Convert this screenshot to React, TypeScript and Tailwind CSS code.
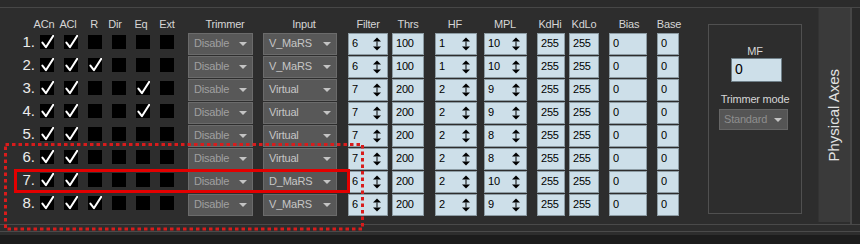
import React from "react";

type Row = {
  n: number;
  c: number[];
  input: string;
  f: number;
  t: number;
  hf: number;
  mpl: number;
};

const rows: Row[] = [
  { n: 1, c: [1, 1, 0, 0, 0, 0], input: "V_MaRS", f: 6, t: 100, hf: 1, mpl: 10 },
  { n: 2, c: [1, 1, 1, 0, 0, 0], input: "V_MaRS", f: 6, t: 100, hf: 1, mpl: 10 },
  { n: 3, c: [1, 1, 0, 0, 1, 0], input: "Virtual", f: 7, t: 200, hf: 2, mpl: 9 },
  { n: 4, c: [1, 1, 0, 0, 1, 0], input: "Virtual", f: 7, t: 200, hf: 2, mpl: 9 },
  { n: 5, c: [1, 1, 0, 0, 0, 0], input: "Virtual", f: 7, t: 200, hf: 2, mpl: 8 },
  { n: 6, c: [1, 1, 0, 0, 0, 0], input: "Virtual", f: 7, t: 200, hf: 2, mpl: 8 },
  { n: 7, c: [1, 1, 0, 0, 0, 0], input: "D_MaRS", f: 6, t: 200, hf: 2, mpl: 10 },
  { n: 8, c: [1, 1, 1, 0, 0, 0], input: "V_MaRS", f: 6, t: 200, hf: 2, mpl: 9 },
];

const headers: { t: string; cls: string }[] = [
  { t: "ACn", cls: "ml-[36px] w-[16px]" },
  { t: "ACl", cls: "ml-[8px] w-[16px]" },
  { t: "R", cls: "ml-[14px] w-[8px]" },
  { t: "Dir", cls: "ml-[9px] w-[16px]" },
  { t: "Eq", cls: "ml-[11px] w-[14px]" },
  { t: "Ext", cls: "ml-[10px] w-[18px]" },
  { t: "Trimmer", cls: "ml-[27px] w-[44px]" },
  { t: "Input", cls: "ml-[42px] w-[30px]" },
  { t: "Filter", cls: "ml-[34px] w-[30px]" },
  { t: "Thrs", cls: "ml-[13px] w-[24px]" },
  { t: "HF", cls: "ml-[27px] w-[16px]" },
  { t: "MPL", cls: "ml-[30px] w-[24px]" },
  { t: "KdHi", cls: "ml-[20px] w-[26px]" },
  { t: "KdLo", cls: "ml-[7px] w-[28px]" },
  { t: "Bias", cls: "ml-[20px] w-[22px]" },
  { t: "Base", cls: "ml-[16px] w-[26px]" },
];

function Check({ on }: { on: boolean }) {
  return (
    <div className="w-[14px] h-[14px] bg-black shrink-0">
      {on && (
        <svg width="14" height="14" viewBox="0 0 14 14">
          <path
            d="M2.4 7.6 L5.9 12.2 L13.2 0.8"
            fill="none"
            stroke="#ffffff"
            strokeWidth="2"
            strokeLinecap="round"
            strokeLinejoin="round"
          />
        </svg>
      )}
    </div>
  );
}

function DownArrow() {
  return (
    <svg width="8" height="4" viewBox="0 0 8 4" className="shrink-0">
      <polygon points="0,0 8,0 4,4" fill="#c4c4c4" />
    </svg>
  );
}

function SpinArrows() {
  return (
    <svg width="8" height="14" viewBox="0 0 8 14" className="shrink-0">
      <polygon points="0,4.5 4,0.5 8,4.5" fill="#000" />
      <rect x="3.5" y="4.5" width="1" height="5" fill="#000" />
      <polygon points="0,9.5 8,9.5 4,13.5" fill="#000" />
    </svg>
  );
}

function Drop({ cls, text, dim }: { cls: string; text: string; dim?: boolean }) {
  return (
    <div
      className={`${cls} h-[22px] shrink-0 bg-[#585858] border border-[#6b6b6b] flex items-center justify-between pl-[5px] pr-[5px] pb-[1px] text-[11px] ${
        dim ? "text-[#a0a0a0]" : "text-[#c6c6c6]"
      }`}
    >
      <span className="whitespace-nowrap">{text}</span>
      <DownArrow />
    </div>
  );
}

function Spin({ cls, v, arrows }: { cls: string; v: number; arrows?: boolean }) {
  return (
    <div
      className={`${cls} h-[22px] shrink-0 bg-[#cddfe9] border border-[#8d9ca4] flex items-center justify-between pl-[3px] pr-[6px] text-[11px] text-black`}
    >
      <span className="pb-[2px]">{v}</span>
      {arrows && <SpinArrows />}
    </div>
  );
}

export default function App() {
  return (
    <div className="w-[860px] h-[244px] bg-[#2d2d2d] relative overflow-hidden flex flex-col font-['Liberation_Sans',Arial,sans-serif] tracking-[-0.2px]">
      <div className="h-[7px] bg-[#2b2b2b]" />
      <div className="h-px bg-[#474747]" />
      <div className="h-[216px] flex">
        <div className="w-[818px] flex">
          <div className="w-[708px] flex flex-col">
            <div className="h-[25px] pt-[7px] flex items-center text-[11px] text-[#d6d6d6]">
              {headers.map((h) => (
                <div key={h.t} className={`${h.cls} flex justify-center whitespace-nowrap`}>
                  {h.t}
                </div>
              ))}
            </div>
            <div className="flex flex-col gap-px">
              {rows.map((r) => (
                <div key={r.n} className="h-[22px] flex items-center">
                  <div className="w-[35px] text-right text-[15px] leading-[14px] text-[#ececec] self-start mt-[2px] tracking-normal">
                    {r.n}.
                  </div>
                  <div className="ml-[5px] flex gap-[10px] self-start mt-[2px]">
                    {r.c.map((v, i) => (
                      <Check key={i} on={v === 1} />
                    ))}
                  </div>
                  <Drop cls="ml-[14px] w-[65px]" text="Disable" dim />
                  <Drop cls="ml-[10px] w-[74px]" text={r.input} />
                  <Spin cls="ml-[11px] w-[40px]" v={r.f} arrows />
                  <Spin cls="ml-[4px] w-[32px]" v={r.t} />
                  <Spin cls="ml-[11px] w-[42px]" v={r.hf} arrows />
                  <Spin cls="ml-[7px] w-[43px]" v={r.mpl} arrows />
                  <Spin cls="ml-[10px] w-[28px]" v={255} />
                  <Spin cls="ml-[4px] w-[30px]" v={255} />
                  <Spin cls="ml-[10px] w-[38px]" v={0} />
                  <Spin cls="ml-[10px] w-[22px]" v={0} />
                </div>
              ))}
            </div>
          </div>
          <div className="w-[94px] h-[190px] mt-[16px] border border-[#505050] flex flex-col items-center">
            <div className="mt-[20px] text-[11px] leading-[13px] text-[#d6d6d6]">MF</div>
            <div className="w-[51px] h-[24px] bg-[#cddfe9] border border-[#6f7f88] flex items-center pl-[3px] pb-[1px] text-[14px] text-black ml-[3px]">
              0
            </div>
            <div className="mt-[11px] text-[11px] leading-[13px] text-[#d6d6d6] whitespace-nowrap">
              Trimmer mode
            </div>
            <div className="mt-[3px] w-[69px] h-[21px] bg-[#555555] border border-[#666666] flex items-center justify-between pl-[4px] pr-[5px] text-[11px] text-[#8e8e8e] -ml-[3px]">
              <span>Standard</span>
              <DownArrow />
            </div>
          </div>
        </div>
        <div className="w-[32px] h-[214px] bg-[#3a3a3a] border-l border-[#333333] flex items-center justify-center">
          <span className="[writing-mode:vertical-rl] rotate-180 text-[15px] text-[#e2e2e2] tracking-normal whitespace-nowrap">
            Physical Axes
          </span>
        </div>
        <div className="w-[10px] bg-[#2a2a2a] border-l-2 border-[#464646]" />
      </div>
      <div className="h-px bg-[#4a4a4a]" />
      <div className="h-[6px]" />
      <div className="h-px bg-[#4a4a4a]" />
      <div className="h-[3px]" />
      <div className="flex-1 bg-[#1c1c1c]" />

      <svg
        className="absolute inset-0 pointer-events-none"
        width="860"
        height="244"
        viewBox="0 0 860 244"
      >
        <rect
          x="5.5"
          y="144.5"
          width="357"
          height="84.5"
          fill="none"
          stroke="#d81c1c"
          strokeWidth="3"
          strokeDasharray="3.5 3"
        />
        <rect
          x="15.5"
          y="170.5"
          width="333"
          height="21"
          fill="none"
          stroke="#e30000"
          strokeWidth="3"
        />
      </svg>
    </div>
  );
}
